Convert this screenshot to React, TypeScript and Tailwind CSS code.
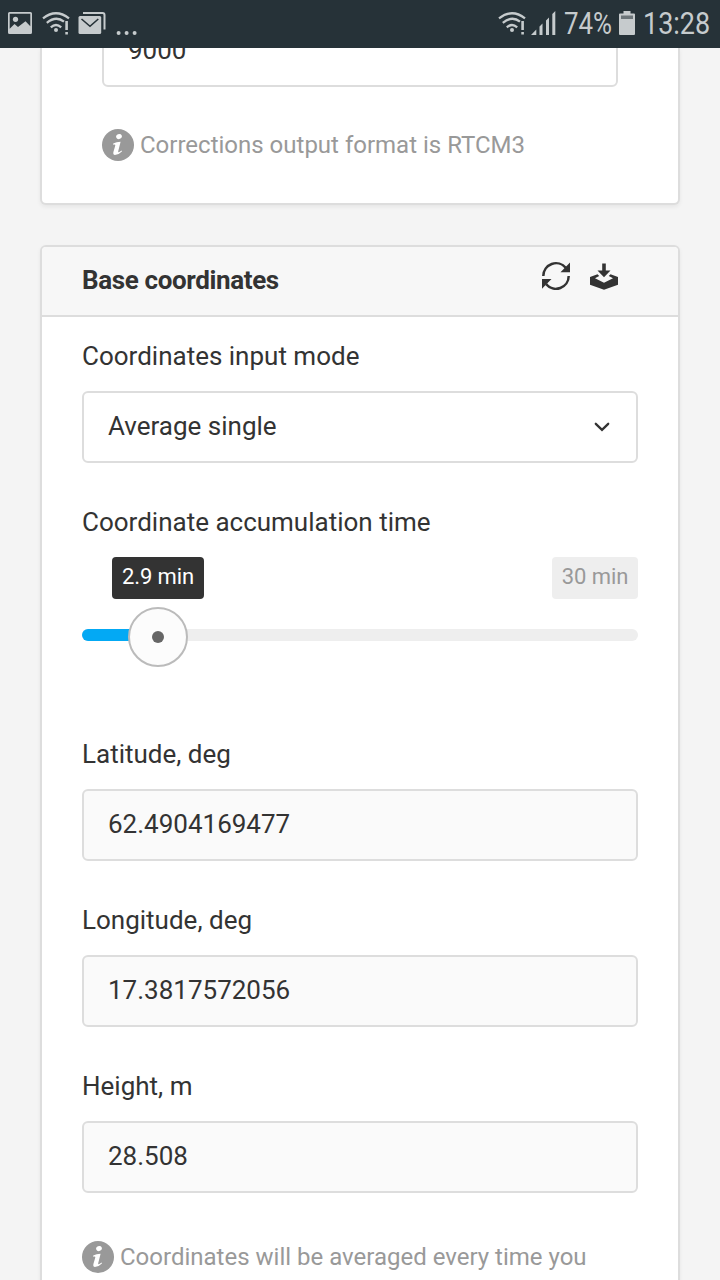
import type { ReactNode } from 'react';

function WifiAlert() {
  return (
    <svg width="28" height="24" viewBox="0 0 28 24" fill="none" stroke="#c6cbcd" strokeWidth="2.3" className="block shrink-0">
      <path d="M1 6.3Q14 -3.7 27 6.3" />
      <path d="M4.8 10.8Q14 3.4 22 9.6" />
      <path d="M8.8 15.3Q14 10.6 19.2 15.3" />
      <circle cx="14" cy="18" r="2" fill="#c6cbcd" stroke="none" />
      <path d="M24.6 9v9M24.6 20v2.4" strokeWidth="2.6" />
    </svg>
  );
}

function StatusBar() {
  return (
    <header className="relative z-10 flex h-12 shrink-0 items-start bg-[#263238] text-[#c6cbcd]">
      <svg width="24" height="22" viewBox="0 0 24 22" className="ml-2 mt-3 block shrink-0">
        <path fillRule="evenodd" fill="#c6cbcd" d="M1.5 0h21Q24 0 24 1.5v19q0 1.5-1.500 1.500h-21Q0 22 0 20.500v-19Q0 0 1.500 0zM1.700 1.700v15L6.500 12l3.500 3 7.500-5.700 4.800 5V1.700z" />
        <circle cx="7.500" cy="7.300" r="2.600" fill="#c6cbcd" />
      </svg>
      <div className="ml-[10px] mt-[11.5px]"><WifiAlert /></div>
      <svg width="28" height="22" viewBox="0 0 28 22" className="ml-2 mt-3 block shrink-0">
        <path d="M5 1H24.500q2 0 2 2V17.500" fill="none" stroke="#c6cbcd" strokeWidth="2" />
        <rect x="0.500" y="4" width="22.700" height="18" rx="1.500" fill="#c6cbcd" />
        <path d="M3.500 7l8.500 7.300L20.300 7" fill="none" stroke="#263238" strokeWidth="1.600" />
      </svg>
      <svg width="22" height="4" viewBox="0 0 22 4" className="ml-[10px] mt-[30.5px] block shrink-0" fill="#c6cbcd">
        <circle cx="2.600" cy="2" r="2" />
        <circle cx="10.600" cy="2" r="2" />
        <circle cx="18.600" cy="2" r="2" />
      </svg>
      <div className="ml-auto mt-[11.5px]"><WifiAlert /></div>
      <svg width="25" height="24" viewBox="0 0 25 24" className="ml-[5px] mt-[11px] block shrink-0" fill="#c6cbcd">
        <path d="M0 24L5.300 18.500V24zM8.500 15.500l3-3V24h-3zM15 9.500l3-3V24h-3zM21.300 3l3-3v24h-3z" />
      </svg>
      <div className="ml-[8px] w-[50px] text-[31px] leading-[48px]">
        <span className="inline-block origin-left scale-x-[0.835]">74%</span>
      </div>
      <svg width="16" height="24" viewBox="0 0 16 24" className="ml-[5px] mt-[11px] block shrink-0">
        <path d="M4.500 0h7v2.500H15q1 0 1 1V23q0 1-1 1H1q-1 0-1-1V3.500q0-1 1-1h3.500z" fill="#c6cbcd" />
        <rect x="2" y="4.500" width="12" height="3.500" fill="#6c7579" />
      </svg>
      <div className="ml-[8px] w-[77px] text-[31px] leading-[48px]">
        <span className="inline-block origin-left scale-x-[0.87]">13:28</span>
      </div>
    </header>
  );
}

function Info({ children }: { children: ReactNode }) {
  return (
    <div className="flex h-8 items-center gap-[6px] whitespace-nowrap text-[24px] leading-8 text-[#999]">
      <svg width="32" height="32" viewBox="0 0 32 32" className="block shrink-0">
        <circle cx="16" cy="16" r="16" fill="#999" />
        <ellipse cx="17" cy="7.600" rx="2.900" ry="2.500" transform="rotate(-25 17 7.600)" fill="#fff" />
        <path d="M11.200 14.500Q14.500 13 18.600 12.700L16.200 22.300Q16 23.800 17.300 23L19.700 21.400L19.900 22.500Q16.500 26 13 26Q10.800 25.800 11.400 22.900L13.300 16.400Q13.500 15.200 11.200 15.700Z" fill="#fff" />
      </svg>
      <span>{children}</span>
    </div>
  );
}

function Label({ children }: { children: ReactNode }) {
  return <label className="block h-9 whitespace-nowrap text-[26px] leading-9">{children}</label>;
}

function Field({ label, value }: { label: string; value: string }) {
  return (
    <div>
      <Label>{label}</Label>
      <div className="mt-[17px] flex h-[72px] items-center rounded-md border-2 border-[#ddd] bg-[#fafafa] px-6 pb-[2px] text-[26px]">
        {value}
      </div>
    </div>
  );
}

function TimeSlider() {
  return (
    <div className="h-[191px]">
      <Label>Coordinate accumulation time</Label>
      <div className="mt-[17px] flex h-[42px] justify-between pl-[30px] text-[22px] leading-[40px] tracking-[-0.1px]">
        <span className="w-[92px] rounded-[4px] bg-[#333] text-center text-white">2.9 min</span>
        <span className="w-[86px] rounded-[4px] bg-[#eee] text-center text-[#999]">30 min</span>
      </div>
      <div className="relative mt-[30px] h-3 rounded-full bg-[#eee]">
        <div className="h-3 w-[76px] rounded-l-full bg-[#03a9f4]" />
        <div className="absolute left-[46px] top-[-22px] flex size-[60px] items-center justify-center rounded-full border-2 border-[#bbb] bg-[#fcfcfc]">
          <span className="size-3 rounded-full bg-[#666]" />
        </div>
      </div>
    </div>
  );
}

export default function App() {
  return (
    <div className="flex h-[1280px] w-[720px] flex-col overflow-hidden bg-[#f4f4f4] font-['Roboto',sans-serif] text-[#333]">
      <StatusBar />
      <main className="flex flex-col px-10">
        <section className="h-[157px] shrink-0 rounded-b-md border-2 border-t-0 border-[#ddd] bg-white px-[60px] shadow-[0_2px_4px_rgba(0,0,0,0.06)]">
          <div className="-mt-[33px] flex h-[72px] items-center rounded-md border-2 border-[#ddd] px-6 pb-[2px] text-[26px]">9000</div>
          <div className="mt-[42px]"><Info>Corrections output format is RTCM3</Info></div>
        </section>
        <section className="mt-10 h-[1080px] shrink-0 overflow-hidden rounded-md border-2 border-[#ddd] bg-white shadow-[0_2px_4px_rgba(0,0,0,0.06)]">
          <div className="flex h-[70px] justify-between border-b-2 border-[#ddd] bg-[#f7f7f7] pl-10 pr-[60px]">
            <h2 className="text-[26px] font-bold leading-[66px] tracking-[-0.37px]">Base coordinates</h2>
            <div className="mt-[15px] flex gap-5">
              <svg width="28" height="28" viewBox="0 0 28 28" className="block">
                <path d="M1.300 14A12.700 12.700 0 0 1 23.800 5.900M26.700 14A12.700 12.700 0 0 1 4.200 22.100" fill="none" stroke="#333" strokeWidth="2.500" />
                <path d="M28 0.500v9.700h-9.500zM0 26.700V17h9.500z" fill="#333" />
              </svg>
              <svg width="28" height="28" viewBox="0 0 28 28" className="block" fill="#333">
                <path d="M12.200 1.500h3.600V8.500h4.700L14 15.200 7.500 8.500h4.700z" />
                <path d="M7.500 12.300L9.200 14 5 16.300 14 20.700 23 16.300 18.800 14 20.500 12.300 28 15V22.800L14 27.800 0 22.800V15z" />
              </svg>
            </div>
          </div>
          <div className="flex flex-col gap-[41px] px-10 pt-[21px]">
            <div>
              <Label>Coordinates input mode</Label>
              <div className="mt-[17px] flex h-[72px] items-center justify-between rounded-md border-2 border-[#ddd] bg-white px-6 pb-[2px] text-[26px]">
                Average single
                <svg width="16" height="10" viewBox="0 0 16 10" className="mr-[2px] mt-px block">
                  <path d="M1.800 1.800L8 7.800l6.200-6" fill="none" stroke="#333" strokeWidth="2.300" strokeLinecap="round" />
                </svg>
              </div>
            </div>
            <TimeSlider />
            <Field label="Latitude, deg" value="62.4904169477" />
            <Field label="Longitude, deg" value="17.3817572056" />
            <Field label="Height, m" value="28.508" />
            <div className="mt-[7px]"><Info>Coordinates will be averaged every time you</Info></div>
          </div>
        </section>
      </main>
    </div>
  );
}
